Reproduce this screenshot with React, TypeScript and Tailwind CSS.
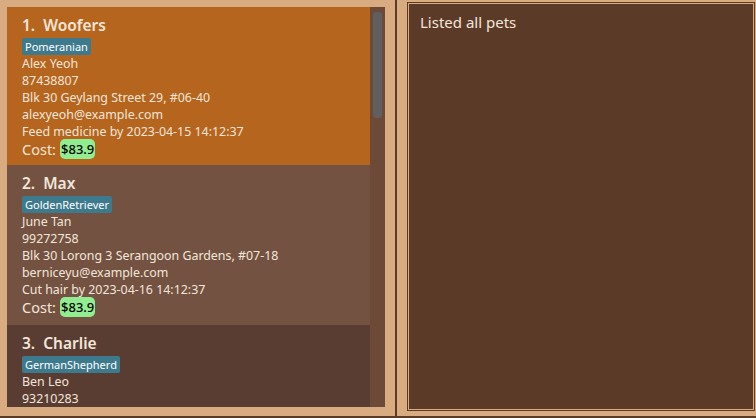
const pets = [
  {
    idx: 1,
    name: "Woofers",
    breed: "Pomeranian",
    lines: ["Alex Yeoh", "87438807", "Blk 30 Geylang Street 29, #06-40", "alexyeoh@example.com", "Feed medicine by 2023-04-15 14:12:37"],
    cost: "$83.9",
    bg: "bg-[#b5651e]",
    h: "h-[158px]",
  },
  {
    idx: 2,
    name: "Max",
    breed: "GoldenRetriever",
    lines: ["June Tan", "99272758", "Blk 30 Lorong 3 Serangoon Gardens, #07-18", "berniceyu@example.com", "Cut hair by 2023-04-16 14:12:37"],
    cost: "$83.9",
    bg: "bg-[#745241]",
    h: "h-[160px]",
  },
  {
    idx: 3,
    name: "Charlie",
    breed: "GermanShepherd",
    // only what fits above the list's bottom edge
    lines: ["Ben Leo", "93210283"],
    cost: "",
    bg: "bg-[#5a3d32]",
    h: "flex-1",
  },
]

function PetCard({ pet }: { pet: (typeof pets)[number] }) {
  return (
    <div className={`${pet.bg} ${pet.h} shrink-0 pl-[15px] pt-[7px] text-[#f2e6da]`}>
      <p className="text-[15.5px] font-semibold leading-[22px] whitespace-pre">{`${pet.idx}.  ${pet.name}`}</p>
      <div className="flex">
        <span className="mt-[2px] bg-[#3e7a8d] rounded-[2px] px-[3px] text-[11px] leading-[17px] text-white">{pet.breed}</span>
      </div>
      <div className="text-[12.4px] leading-[17px]">
        {pet.lines.map(l => <p key={l}>{l}</p>)}
      </div>
      {pet.cost && (
        <div className="flex items-center gap-[4px] -mt-px">
          <span className="text-[14.5px] leading-[20px]">Cost:</span>
          <span className="bg-[#90ee90] text-black rounded-[5px] px-px text-[13px] font-medium leading-[20px]">{pet.cost}</span>
        </div>
      )}
    </div>
  )
}

export default function App() {
  return (
    <div
      className="w-[756px] h-[418px] bg-[#d8ab80] flex flex-col overflow-hidden"
      style={{ fontFamily: '"Noto Sans", "Open Sans", sans-serif' }}
    >
      <div className="flex flex-1 min-h-0">
        <div className="w-[395px] pl-[7px] pt-[7px] pr-[10px] pb-[9px] flex">
          <div className="flex flex-1 min-w-0 overflow-hidden">
            <div className="flex flex-col flex-1 overflow-hidden">
              {pets.map(p => <PetCard key={p.idx} pet={p} />)}
            </div>
            <div className="w-[15px] bg-[#6c4a37] pt-[5px] px-[3px]">
              <div className="h-[106px] rounded-[3px] bg-[#5f5f5f]"></div>
            </div>
          </div>
        </div>
        <div className="w-[2px] bg-[#5c3a28]"></div>
        <div className="flex-1 pl-[10px] pt-[2px] pr-px pb-[5px] flex">
          <div className="flex-1 border border-[#5c3a28] p-px flex">
            <div className="flex-1 bg-[#5c3a28] px-[11px] pt-[8px]">
              <p className="text-[15px] leading-[20px] text-[#f2e6da]">Listed all pets</p>
            </div>
          </div>
        </div>
      </div>
      <div className="h-[2px] bg-[#5c3a28]"></div>
    </div>
  )
}
